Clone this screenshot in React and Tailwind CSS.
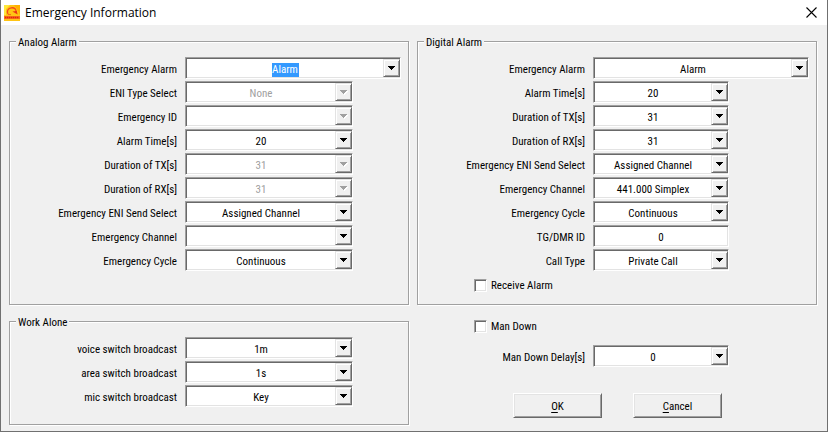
import React from "react";

const FONT = "font-['Roboto_Condensed','Arial_Narrow',Roboto,'Liberation_Sans',sans-serif]";

const SUNKEN =
  "h-[22px] border border-t-[#a0a0a0] border-l-[#a0a0a0] border-r-white border-b-white bg-white shadow-[inset_1px_1px_0_#696969,inset_-1px_-1px_0_#e3e3e3]";

const RAISED =
  "border border-t-[#e3e3e3] border-l-[#e3e3e3] border-r-[#696969] border-b-[#696969] bg-[#f0f0f0] shadow-[inset_1px_1px_0_#ffffff,inset_-1px_-1px_0_#a0a0a0]";

function AppIcon() {
  return (
    <svg className="h-4 w-4 shrink-0" viewBox="0 0 16 16" aria-hidden="true">
      <rect width="16" height="16" fill="#ffc414" />
      <path d="M0 0H6L2 4V10H0Z" fill="#ffe83a" />
      <path d="M10 0H16V10L13 4Z" fill="#ffb000" />
      <path
        d="M4 9C2.4 6.2 4 3.2 7.4 2.8C10.6 2.5 12.4 4.4 12 7"
        fill="none"
        stroke="#f4481c"
        strokeWidth="1.3"
      />
      <path d="M8.4 6.4L13.6 9.4L12.8 6Z" fill="#ec3414" />
      <path d="M4 9.6H7" stroke="#f4601a" strokeWidth="1" />
      <rect y="11" width="16" height="3" fill="#f8701a" />
      <path d="M1 12.5H15" stroke="#e0240f" strokeWidth="1.6" strokeDasharray="1.4 .6" />
    </svg>
  );
}

function Arrow({ disabled }) {
  return (
    <span
      aria-hidden="true"
      className={`pointer-events-none absolute top-0.5 right-px bottom-0.5 flex w-[17px] items-center justify-center ${RAISED}`}
    >
      <svg className="h-[5px] w-2" viewBox="0 0 8 5" shapeRendering="crispEdges">
        {disabled && <path d="M1 1h7v1h-1v1h-1v1h-1v1h-1v-1h-1v-1h-1v-1h-1z" fill="#fff" />}
        <path d="M0 0h7v1h-1v1h-1v1h-1v1h-1v-1h-1v-1h-1v-1h-1z" fill={disabled ? "#a0a0a0" : "#000"} />
      </svg>
    </span>
  );
}

function Row({ id, label, width, children }) {
  return (
    <div className="flex items-center gap-2">
      <label htmlFor={id} className="flex-1 pt-1 text-right whitespace-nowrap">
        {label}
      </label>
      <div className="w-[216px] shrink-0">
        <div className={`relative ${width}`}>{children}</div>
      </div>
    </div>
  );
}

function Combo({ id, label, value = "", width, disabled = false, selected = false }) {
  const tone = selected
    ? "bg-[linear-gradient(#3399ff,#3399ff)] bg-[length:27px_15px] bg-center bg-no-repeat bg-origin-content text-white"
    : disabled
      ? "text-[#a0a0a0] opacity-100"
      : "text-black";
  return (
    <Row id={id} label={label} width={width}>
      <select
        id={id}
        disabled={disabled}
        defaultValue={value}
        className={`block w-full appearance-none rounded-none pt-1 pr-[17px] pb-0 pl-px [text-align-last:center] outline-none ${SUNKEN} ${tone}`}
      >
        <option value={value}>{value}</option>
      </select>
      <Arrow disabled={disabled} />
    </Row>
  );
}

function Group({ title, bottom, children }) {
  return (
    <fieldset
      className={`min-w-0 border border-[#a0a0a0] pt-2 pr-[7px] shadow-[1px_1px_0_#fff,inset_1px_1px_0_#fff] ${bottom}`}
    >
      <legend className="ml-1.5 h-[15px] bg-[#f0f0f0] px-0.5 leading-[17px]">{title}</legend>
      <div className="flex flex-col gap-0.5">{children}</div>
    </fieldset>
  );
}

function Check({ label }) {
  return (
    <label className="ml-14 flex h-6 items-center gap-1 self-start">
      <input
        type="checkbox"
        className="h-[13px] w-[13px] appearance-none border border-t-[#a0a0a0] border-l-[#a0a0a0] border-r-white border-b-white bg-white shadow-[inset_1px_1px_0_#696969,inset_-1px_-1px_0_#e3e3e3] checked:bg-[#3399ff]"
      />
      <span className="pt-0.5">{label}</span>
    </label>
  );
}

function PushButton({ hot, rest }) {
  return (
    <button
      type="button"
      className="h-[25px] w-[89px] border border-t-white border-l-white border-r-[#696969] border-b-[#696969] bg-[#f0f0f0] pt-0.5 shadow-[inset_1px_1px_0_#e3e3e3,inset_-1px_-1px_0_#a0a0a0]"
    >
      <span className="underline underline-offset-2">{hot}</span>
      {rest}
    </button>
  );
}

const W = "w-[168px]";
const N = "w-[136px]";
const FULL = "w-full";

export default function App() {
  return (
    <div className="min-h-screen border-x border-b border-[#707070] bg-[#f0f0f0] text-black">
      <header className="flex h-[25px] items-center gap-[5px] bg-white pr-2.5 pl-[3px]">
        <AppIcon />
        <h1 className="flex-1 font-['Open_Sans','Noto_Sans',sans-serif] text-[12px] leading-4">
          Emergency Information
        </h1>
        <button type="button" aria-label="Close" className="h-[11px] w-[11px]">
          <svg viewBox="0 0 11 11" className="block h-[11px] w-[11px]">
            <path d="M.5 .5L10.5 10.5M10.5 .5L.5 10.5" stroke="#000" strokeWidth="1.1" />
          </svg>
        </button>
      </header>

      <main className={`grid grid-cols-2 gap-x-2 gap-y-[9px] pt-[9px] pr-2.5 pb-1.5 pl-2 text-[11px] leading-4 ${FONT}`}>
        <Group title="Analog Alarm" bottom="pb-[7px]">
          <Combo id="a-alarm" label="Emergency Alarm" value="Alarm" width={FULL} selected />
          <Combo id="a-eni" label="ENI Type Select" value="None" width={W} disabled />
          <Combo id="a-id" label="Emergency ID" width={W} disabled />
          <Combo id="a-time" label="Alarm Time[s]" value="20" width={W} />
          <Combo id="a-tx" label="Duration of TX[s]" value="31" width={W} disabled />
          <Combo id="a-rx" label="Duration of RX[s]" value="31" width={W} disabled />
          <Combo id="a-send" label="Emergency ENI Send Select" value="Assigned Channel" width={W} />
          <Combo id="a-channel" label="Emergency Channel" width={W} />
          <Combo id="a-cycle" label="Emergency Cycle" value="Continuous" width={W} />
        </Group>

        <Group title="Digital Alarm" bottom="pb-[7px]">
          <Combo id="d-alarm" label="Emergency Alarm" value="Alarm" width={FULL} />
          <Combo id="d-time" label="Alarm Time[s]" value="20" width={N} />
          <Combo id="d-tx" label="Duration of TX[s]" value="31" width={N} />
          <Combo id="d-rx" label="Duration of RX[s]" value="31" width={N} />
          <Combo id="d-send" label="Emergency ENI Send Select" value="Assigned Channel" width={N} />
          <Combo id="d-channel" label="Emergency Channel" value="441.000 Simplex" width={N} />
          <Combo id="d-cycle" label="Emergency Cycle" value="Continuous" width={N} />
          <Row id="d-tg" label="TG/DMR ID" width={N}>
            <input
              id="d-tg"
              type="text"
              defaultValue="0"
              className={`block w-full pt-0.5 text-center outline-none ${SUNKEN}`}
            />
          </Row>
          <Combo id="d-call" label="Call Type" value="Private Call" width={N} />
          <Check label="Receive Alarm" />
        </Group>

        <Group title="Work Alone" bottom="pb-[17px]">
          <Combo id="w-voice" label="voice switch broadcast" value="1m" width={W} />
          <Combo id="w-area" label="area switch broadcast" value="1s" width={W} />
          <Combo id="w-mic" label="mic switch broadcast" value="Key" width={W} />
        </Group>

        <div className="flex flex-col px-px">
          <Check label="Man Down" />
          <div className="mt-[7px] pr-[7px]">
            <Combo id="m-delay" label="Man Down Delay[s]" value="0" width={N} />
          </div>
          <div className="mt-[26px] flex gap-[31px] pl-[95px]">
            <PushButton hot="O" rest="K" />
            <PushButton hot="C" rest="ancel" />
          </div>
        </div>
      </main>
    </div>
  );
}
